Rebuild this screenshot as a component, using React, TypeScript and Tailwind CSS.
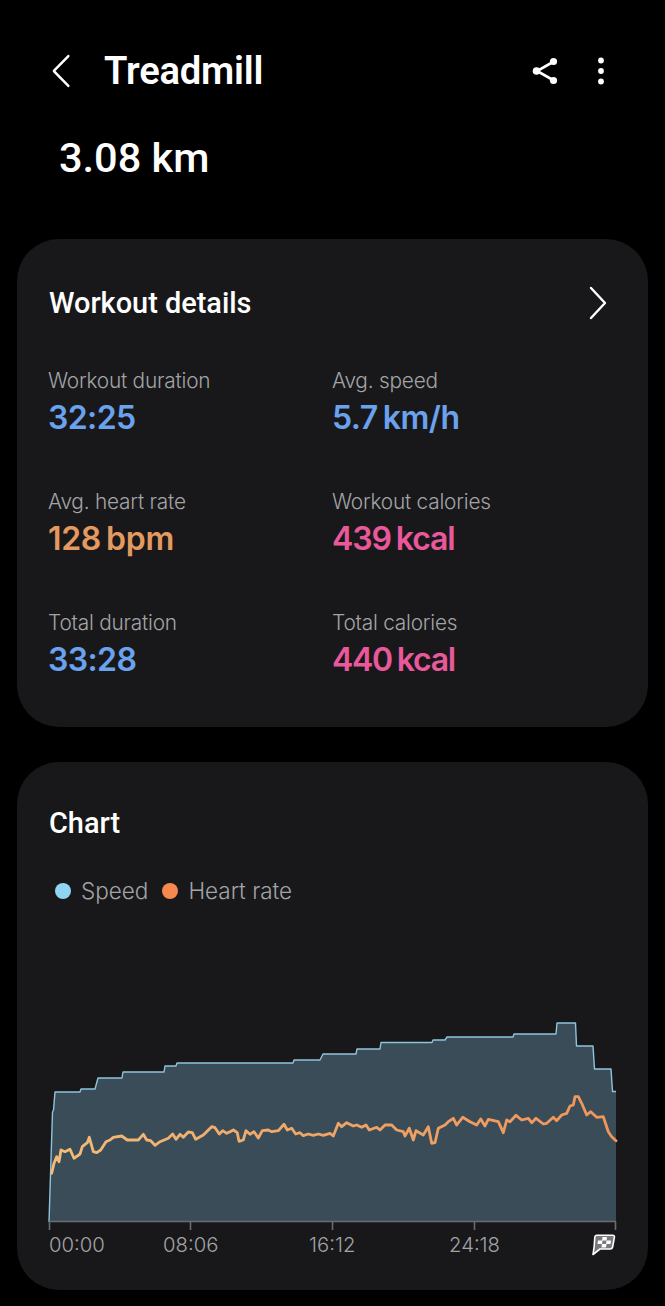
import React from "react";

const speed: [number, number][] = [
  [49,1222],[52.5,1112],[53.5,1110],[55,1092],[80,1092],[81,1089],[95,1089],[98,1078],[122,1078],[123,1072],[164,1072],[165,1066],[176,1066],[177,1063],[293,1063],[294,1060],[320,1060],[323,1054],[356,1054],[357,1049],[380,1049],[381,1042.5],[432,1042.5],[433,1040],[445,1040],[447,1037],[513,1037],[514,1034],[556,1034],[557,1023],[575.5,1023],[576.5,1046],[593,1046],[594.5,1069],[611,1069],[612.5,1091.5],[616,1091.5],
];

const hrLeft: [number, number][] = [[65,520],[72,490],[80,470],[87,485],[93,450],[105,455],[120,448],[132,475],[150,462],[157,440],[172,428],[178,412],[190,455],[200,458],[212,450],[228,425],[240,420],[250,412],[275,408],[292,420],[325,420],[340,403],[350,420],[362,422],[375,436],[390,425],[415,415],[428,402],[438,418],[450,403],[460,412],[475,396],[487,398],[497,418],[520,405],[545,380],[555,383],[568,402],[578,392],[590,400],[600,395],[610,390],[622,398],[627,424],[640,420],[648,392],[660,403],[672,395],[685,414],[697,392],[715,390],[725,395],[745,392],[762,373],[772,390],[785,385],[797,402],[810,398],[820,407],[835,402],[850,406],[865,402],[880,406],[900,400]];
const hrRight: [number, number][] = [[10,408],[25,370],[35,380],[50,368],[70,378],[80,375],[95,382],[108,375],[118,390],[140,382],[150,390],[165,375],[185,375],[200,390],[220,395],[225,408],[238,385],[250,420],[258,392],[280,405],[295,380],[305,430],[315,428],[325,385],[345,375],[355,365],[370,355],[380,375],[398,352],[420,365],[440,375],[452,357],[465,378],[475,358],[505,365],[520,398],[530,360],[540,365],[558,346],[575,360],[595,355],[605,368],[618,355],[640,372],[650,370],[670,352],[680,362],[695,345],[710,340],[720,318],[730,315],[735,290],[745,290],[755,310],[770,345],[782,335],[800,352],[820,350],[835,395],[845,410],[858,422]];

const hr = [
  ...hrLeft.map(([x, y]) => [30 + x / 3, 1000 + y / 3]),
  ...hrRight.map(([x, y]) => [330 + x / 3, 1000 + y / 3]),
];

const toPts = (a: number[][]) => a.map(([x, y]) => `${(x - 17).toFixed(1)},${(y - 1000).toFixed(1)}`).join(" ");

function Stat({ label, value, unit, color }: { label: string; value: string; unit?: string; color: string }) {
  return (
    <div className="flex flex-col">
      <div className="font-['Inter',sans-serif] text-[20.8px] leading-[26px] font-light text-[#a3a4a6] tracking-[-0.2px]">{label}</div>
      <div className={`mt-[4px] font-['Inter',sans-serif] text-[32px] leading-[40px] font-semibold ${color}`}>
        {value}
        {unit ? <span className="ml-[5px]">{unit}</span> : null}
      </div>
    </div>
  );
}

export default function App() {
  return (
    <div className="w-[665px] h-[1306px] overflow-hidden bg-black text-white font-['Roboto',sans-serif]">
      <header className="flex items-center h-[60px] mt-[41px] pl-[51px] pr-[60px]">
        <svg width="22" height="34" viewBox="0 0 22 34" fill="none" stroke="#fff" strokeWidth="2.4" strokeLinecap="round" strokeLinejoin="round" className="mr-[31px]">
          <path d="M19 2 L3 17 L19 32" transform="scale(0.92 1)" />
        </svg>
        <h1 className="text-[38.2px] leading-[60px] font-semibold tracking-[-0.2px]">Treadmill</h1>
        <div className="ml-auto flex items-center gap-[39px]">
          <svg width="26" height="28" viewBox="0 0 26 28" fill="#fff" stroke="#fff">
            <path d="M21 5 L5 14 L21 23" fill="none" strokeWidth="2.6" />
            <circle cx="21.5" cy="4.5" r="3.6" strokeWidth="0" />
            <circle cx="4.5" cy="14" r="3.8" strokeWidth="0" />
            <circle cx="21.5" cy="23.5" r="3.6" strokeWidth="0" />
          </svg>
          <svg width="8" height="28" viewBox="0 0 8 28" fill="#fff">
            <circle cx="4" cy="3.5" r="2.9" />
            <circle cx="4" cy="14" r="2.9" />
            <circle cx="4" cy="24.5" r="2.9" />
          </svg>
        </div>
      </header>

      <div className="ml-[59px] mt-[26px] h-[62px] text-[41.5px] leading-[62px] font-medium">3.08 km</div>

      <div className="px-[17px] mt-[50px] flex flex-col gap-[35px]">
        <section className="h-[488px] rounded-[42px] bg-[#18181a] pl-[32px] pr-[40px] pt-[44px]">
          <div className="flex items-center justify-between h-[40px]">
            <h2 className="text-[28.9px] leading-[40px] font-medium">Workout details</h2>
            <svg width="20" height="34" viewBox="0 0 20 34" fill="none" stroke="#fff" strokeWidth="2.4" strokeLinecap="round" strokeLinejoin="round">
              <path d="M3 2 L17 17 L3 32" />
            </svg>
          </div>
          <div className="grid grid-cols-[284px_1fr] gap-y-[51px] mt-[45px] tracking-[-0.9px] -ml-[1px]">
            <Stat label="Workout duration" value="32:25" color="text-[#6aa2ee] tracking-[-0.6px]" />
            <Stat label="Avg. speed" value="5.7" unit="km/h" color="text-[#6aa2ee] tracking-[-0.5px]" />
            <Stat label="Avg. heart rate" value="128" unit="bpm" color="text-[#e39a60] tracking-[-0.3px]" />
            <Stat label="Workout calories" value="439" unit="kcal" color="text-[#e8589b] tracking-[-1.1px]" />
            <Stat label="Total duration" value="33:28" color="text-[#6aa2ee] tracking-[-0.6px]" />
            <Stat label="Total calories" value="440" unit="kcal" color="text-[#e8589b] tracking-[-1.3px]" />
          </div>
        </section>

        <section className="h-[528px] rounded-[42px] bg-[#18181a] pt-[41px]">
          <h2 className="pl-[32px] text-[28.9px] leading-[40px] font-medium">Chart</h2>
          <div className="flex items-center pl-[38px] mt-[33px] h-[30px] font-['Inter',sans-serif] text-[22.5px] font-light text-[#a3a4a6]">
            <span className="w-[16px] h-[16px] rounded-full bg-[#8fd4f2]" />
            <span className="ml-[10px]">Speed</span>
            <span className="ml-[14px] w-[16px] h-[16px] rounded-full bg-[#f5894f]" />
            <span className="ml-[10px]">Heart rate</span>
          </div>
          <svg width="631" height="232" viewBox="0 0 631 232" fill="none" className="block mt-[94px]">
            <defs>
              <linearGradient id="hrGrad" x1="0" x2="1" y1="0" y2="0">
                <stop offset="0" stopColor="#f3bc78" />
                <stop offset="0.5" stopColor="#eea466" />
                <stop offset="1" stopColor="#f0955a" />
              </linearGradient>
            </defs>
            <polygon points={toPts([...speed, [616, 1222]])} fill="#3a4c58" />
            <polyline points={toPts(speed)} stroke="#8ec4dc" strokeWidth="1.4" strokeLinejoin="round" />
            <polyline points={toPts(hr)} stroke="url(#hrGrad)" strokeWidth="2.8" strokeLinejoin="round" strokeLinecap="round" />
            <path d="M32 221.5 H599 M32.5 221 V230 M173.5 221 V230 M315.5 221 V230 M457.5 221 V230 M598.5 221 V230" stroke="#6a6d70" strokeWidth="1.6" />
          </svg>
          <div className="flex items-center pl-[32px] h-[30px] -mt-[2px] font-['Inter',sans-serif] text-[20.3px] font-light text-[#a3a4a6]">
            <span className="w-[57px]">00:00</span>
            <span className="ml-[57px] w-[56px]">08:06</span>
            <span className="ml-[90px] w-[50px]">16:12</span>
            <span className="ml-[90px] w-[54px]">24:18</span>
            <svg width="25" height="22" viewBox="0 0 25 22" className="ml-[88px]">
              <path d="M5.5 1.2 H21.5 Q23.8 1.2 23.4 3.4 L21.6 13 Q21.2 15 19.2 15 H9 L2 20.5 L3.2 12 L3.8 3 Q4 1.2 5.5 1.2 Z" fill="#77797c" stroke="#fff" strokeWidth="1.6" strokeLinejoin="round" />
              <path d="M11.5 3 h4.5 l-0.5 3.5 h-4.5 z M7 6.5 h4.5 l-0.5 3.5 h-4.5 z M15.5 6.5 h4.5 l-0.5 3.5 h-4.5 z M11 10 h4.5 l-0.5 3.5 h-4.5 z" fill="#fff" />
            </svg>
          </div>
        </section>
      </div>
    </div>
  );
}
